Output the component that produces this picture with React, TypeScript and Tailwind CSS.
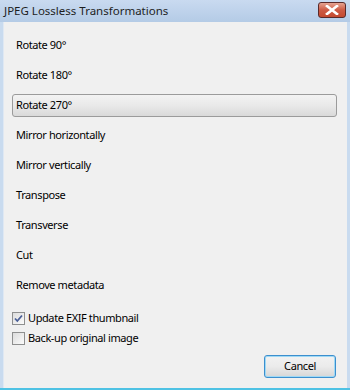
import React from "react";

const items = [
  "Rotate 90°",
  "Rotate 180°",
  "Rotate 270°",
  "Mirror horizontally",
  "Mirror vertically",
  "Transpose",
  "Transverse",
  "Cut",
  "Remove metadata",
];

function Check({ checked }: { checked: boolean }) {
  return (
    <div className="w-[13px] h-[13px] border border-[#8e8f8f] bg-gradient-to-br from-[#dcdcdc] to-[#fbfbfb] flex items-center justify-center">
      {checked && (
        <svg width="11" height="11" viewBox="0 0 11 11">
          <path d="M2 5.5 L4.3 8 L9 2.5" fill="none" stroke="#4a5f97" strokeWidth="1.8" />
        </svg>
      )}
    </div>
  );
}

export default function App() {
  return (
    <div
      className="w-[350px] h-[390px] flex flex-col bg-[#c9dbef] text-[11px] text-black"
      style={{ fontFamily: '"Noto Sans", "Open Sans", sans-serif' }}
    >
      <div className="h-[22px] flex items-center justify-between bg-gradient-to-b from-[#c9daf0] to-[#b4cbe6] pl-[4px] pr-[4px]">
        <span className="text-[11.5px] text-[#1e1e1e] leading-none">JPEG Lossless Transformations</span>
        <div className="w-[28px] h-[16px] mt-[-2px] rounded-[3px] border border-[#5a2a2a] bg-gradient-to-b from-[#e5a392] via-[#cd5a44] to-[#c44a30] flex items-center justify-center">
          <svg width="14" height="10" viewBox="0 0 14 10">
            <path d="M2 1 L12 9 M12 1 L2 9" stroke="#ffffff" strokeWidth="2.6" strokeLinecap="square" />
          </svg>
        </div>
      </div>
      <div className="flex-1 flex flex-col bg-[#f0f0f0] ml-[3px] mr-[3px] border-l border-[#dfe8f3] tracking-[-0.4px]">
        <div className="flex flex-col gap-[7px] pt-[12px] pl-[8px] pr-[10px]">
          {items.map((t, i) => (
            <div
              key={t}
              className={
                "h-[23px] flex items-center pl-[3px] " +
                (i === 2
                  ? "rounded-[3px] border border-[#9b9b9b] bg-gradient-to-b from-[#f3f3f3] via-[#e9e9e9] to-[#d9d9d9]"
                  : "border border-transparent")
              }
            >
              {t}
            </div>
          ))}
        </div>
        <div className="flex flex-col gap-[3px] pt-[13px] pl-[8px]">
          <div className="h-[17px] flex items-center gap-[3px]">
            <Check checked={true} />
            <span>Update EXIF thumbnail</span>
          </div>
          <div className="h-[17px] flex items-center gap-[3px]">
            <Check checked={false} />
            <span>Back-up original image</span>
          </div>
        </div>
        <div className="flex justify-end pr-[11px] pt-[8px]">
          <div className="w-[72px] h-[23px] rounded-[3px] border border-[#3c8fce] bg-gradient-to-b from-[#f2f2f2] via-[#ebebeb] to-[#d6d6d6] flex items-center justify-center shadow-[inset_0_0_0_1px_#9fd9f5]">
            Cancel
          </div>
        </div>
      </div>
      <div className="h-[2px] bg-[#4ec2e4]" />
    </div>
  );
}
